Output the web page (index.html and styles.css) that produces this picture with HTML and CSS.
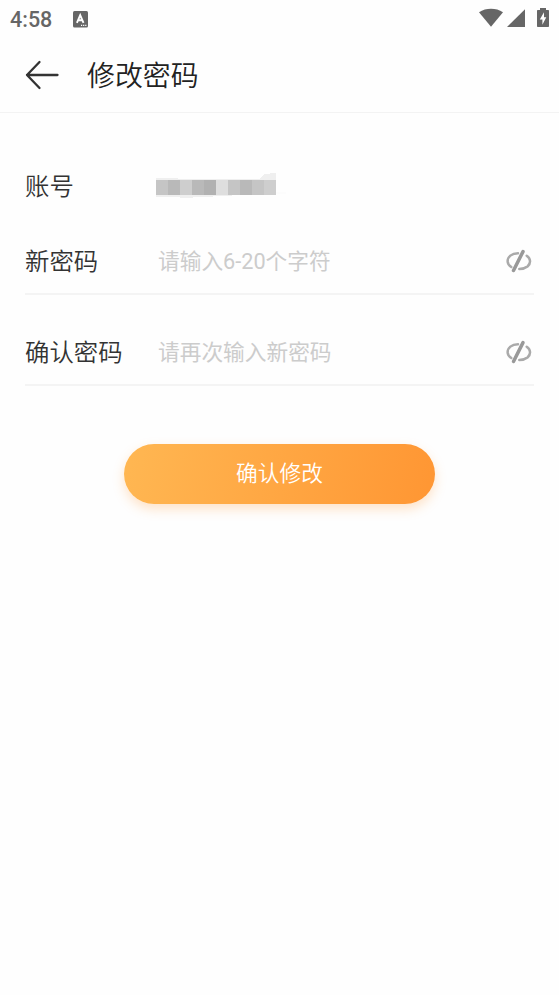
FILE: index.html
```html
<!DOCTYPE html>
<html lang="zh-CN">
<head>
<meta charset="utf-8">
<title>修改密码</title>
<link rel="stylesheet" href="styles.css">
</head>
<body>
<div class="status">
  <span class="time">4:58</span>
  <svg class="app-icon" width="16" height="17" viewBox="0 0 16 17"><rect x="0" y="0" width="15" height="16.5" rx="1.5" fill="#666"/><path d="M3.9 11.8L7.2 4.2L10.5 11.8M5.2 9.3H9.2" fill="none" stroke="#fff" stroke-width="1.9"/><path d="M8 14.3h1.2M10.1 14.3h1.2M12.2 14.3h1.2" stroke="#fff" stroke-width="1.2"/></svg>
  <svg class="signals" width="71" height="21" viewBox="0 0 71 21"><path d="M0 4.2C7-.3 17-.3 24 4.2L12 18.7Z" fill="#666"/><path d="M46 1.3V19H28Z" fill="#666"/><path d="M61 0h6v2h2.3q.7 0 .7.8V18.200q0 .8-.8.8H58.800q-.8 0-.8-.8V2.800q0-.8.7-.8H61Z" fill="#666"/><path d="M65 4.300L60.800 11.500H63.400V16.700L67.300 9.300H65Z" fill="#fff"/></svg>
</div>
<header class="nav">
  <svg class="back" width="34" height="30" viewBox="0 0 34 30"><path d="M14.500 2L2 15L14.500 28M2 15H32.500" fill="none" stroke="#333" stroke-width="2.300" stroke-linecap="round" stroke-linejoin="round"/></svg>
  <h1>修改密码</h1>
</header>
<main>
  <div class="row account">
    <span class="label">账号</span>
    <svg class="mosaic" width="130" height="26" viewBox="0 0 130 26" shape-rendering="crispEdges"><path d="M0 5H22V6H103L108 1L120 0V22H76V23H57V24H37V25H24V24H0Z" fill="#efefef"/><path d="M120 19h12v2h-12z" fill="#fcfcfc"/><path d="M0 7h12v15H0zM72 7h12v15H72zM96 7h12v15H96z" fill="#c5c5c5"/><path d="M12 7h12v15H12zM36 7h12v15H36zM84 7h12v15H84z" fill="#b9b9b9"/><path d="M24 7h12v15H24zM108 7h12v15h-12z" fill="#cecece"/><path d="M48 7h12v15H48z" fill="#b1b1b1"/><path d="M60 7h12v15H60z" fill="#dedede"/></svg>
  </div>
  <div class="row field">
    <span class="label">新密码</span>
    <span class="hint">请输入6-20个字符</span>
    <svg class="eye" width="28" height="26" viewBox="0 0 28 26"><path d="M13 5.200C6.500 5.200 2.600 9 2.600 13.200Q2.700 16.700 6.300 19M21.700 7.700C26 10.500 26 15.500 22.500 18.500Q19.500 20.900 14.300 21" fill="none" stroke="#aaa" stroke-width="2.500" stroke-linecap="round"/><path d="M18 3.600L8.500 22.500" stroke="#999" stroke-width="3.500" stroke-linecap="round"/></svg>
  </div>
  <div class="row field second">
    <span class="label">确认密码</span>
    <span class="hint">请再次输入新密码</span>
    <svg class="eye" width="28" height="26" viewBox="0 0 28 26"><path d="M13 5.200C6.500 5.200 2.600 9 2.600 13.200Q2.700 16.700 6.300 19M21.700 7.700C26 10.500 26 15.500 22.500 18.500Q19.500 20.900 14.300 21" fill="none" stroke="#aaa" stroke-width="2.500" stroke-linecap="round"/><path d="M18 3.600L8.500 22.500" stroke="#999" stroke-width="3.500" stroke-linecap="round"/></svg>
  </div>
  <button class="submit">确认修改</button>
</main>
</body>
</html>
```
FILE: styles.css
```css
* { box-sizing: border-box; }
body {
  margin: 0;
  height: 995px;
  overflow: hidden;
  background: #fefefe;
  color: #333;
  font-family: Roboto, "Noto Sans CJK SC", sans-serif;
}
svg { display: block; flex: none; }
.status {
  display: flex;
  align-items: center;
  height: 38px;
  padding: 0 9px 0 10px;
  color: #666;
}
.time { width: 63px; font-size: 21.500px; line-height: 38px; font-weight: 500; padding-top: 2px; }
.signals { margin: -1px 0 0 auto; }
.nav {
  display: flex;
  align-items: center;
  height: 75px;
  padding-left: 25px;
  border-bottom: 1px solid #f3f3f3;
}
h1 { margin: 4px 0 0 28px; font-size: 27.900px; line-height: 40px; font-weight: 350; color: #222; }
main { padding: 49px 25px 0; }
.row { display: flex; align-items: center; }
.account { height: 48px; }
.account .label { padding-top: 2px; }
.field { height: 85px; padding-top: 20px; border-bottom: 2px solid #f4f4f4; }
.second { height: 91px; padding-top: 26px; }
.label { width: 133px; font-size: 24.400px; line-height: 36px; font-weight: 350; }
.mosaic { margin-left: -2px; }
.hint { font-size: 21.700px; line-height: 32px; font-weight: 400; color: #ccc; }
.eye { margin: -2px 1px 0 auto; }
.submit {
  display: block;
  width: 311px;
  height: 60px;
  margin: 58px auto 0;
  padding: 0;
  border: 0;
  border-radius: 30px;
  background: linear-gradient(100deg, #ffb752, #ff9633);
  box-shadow: 0 5px 12px rgba(255, 150, 51, .27);
  color: #fff;
  font: 350 21.700px/58px Roboto, "Noto Sans CJK SC", sans-serif;
}
```
